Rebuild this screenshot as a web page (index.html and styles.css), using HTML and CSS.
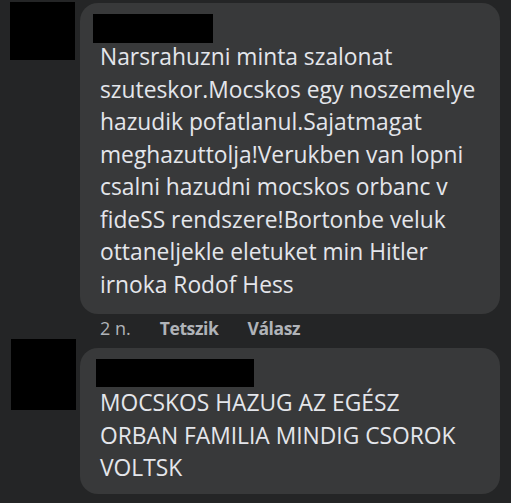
FILE: index.html
```html
<!DOCTYPE html>
<html>
<head>
<meta charset="utf-8">
<link rel="stylesheet" href="styles.css">
</head>
<body>
<div class="thread">
  <div class="comment c1">
    <div class="avatar av1"></div>
    <div class="body">
      <div class="bubble b1">
        <div class="name n1"></div>
        <div class="text">Narsrahuzni minta szalonat<br>szuteskor.Mocskos egy noszemelye<br>hazudik pofatlanul.Sajatmagat<br>meghazuttolja!Verukben van lopni<br>csalni hazudni mocskos orbanc v<br>fideSS rendszere!Bortonbe veluk<br>ottaneljekle eletuket min Hitler<br>irnoka Rodof Hess</div>
      </div>
      <div class="actions">
        <span class="time">2 n.</span>
        <span class="act">Tetszik</span>
        <span class="act">Válasz</span>
      </div>
    </div>
  </div>
  <div class="comment c2">
    <div class="avatar av2"></div>
    <div class="body">
      <div class="bubble b2">
        <div class="name n2"></div>
        <div class="text">MOCSKOS HAZUG AZ EGÉSZ<br>ORBAN FAMILIA MINDIG CSOROK<br>VOLTSK</div>
      </div>
    </div>
  </div>
</div>
</body>
</html>
```
FILE: styles.css
```css
html, body {
  margin: 0;
  padding: 0;
  background: #242526;
  height: 100%;
}
body {
  font-family: "Open Sans", "Noto Sans", sans-serif;
  color: #e4e6eb;
}
.thread {
  padding-top: 2px;
}
.comment {
  display: flex;
  align-items: flex-start;
}
.avatar {
  background: #000;
  flex: none;
}
.av1 {
  width: 65px;
  height: 58px;
  margin-left: 10px;
}
.av2 {
  width: 65px;
  height: 71px;
  margin-left: 11px;
}
.body {
  margin-left: 5px;
  width: 420px;
}
.c2 .body {
  margin-left: 4px;
  margin-top: 9px;
}
.bubble {
  background: #38393a;
  border-radius: 18px;
  padding: 11px 12px 12px 20px;
}
.b1 {
  margin-top: 1px;
}
.b2 {
  padding-bottom: 8px;
}
.b2 .text {
  margin-top: 0;
}
.name {
  background: #000;
  height: 29px;
  margin-left: -7px;
}
.n1 {
  width: 120px;
}
.n2 {
  width: 158px;
  height: 28px;
  margin-left: -4px;
}
.text {
  font-size: 22.8px;
  line-height: 32.5px;
  margin-top: -2px;
  margin-bottom: 1px;
}
.actions {
  display: flex;
  align-items: center;
  height: 23px;
  padding-left: 20px;
  padding-top: 2px;
  font-size: 17.5px;
  color: #b0b3b8;
  gap: 29px;
}
.time {
  font-size: 18px;
}
.act {
  font-weight: 700;
  letter-spacing: -0.4px;
}
```
